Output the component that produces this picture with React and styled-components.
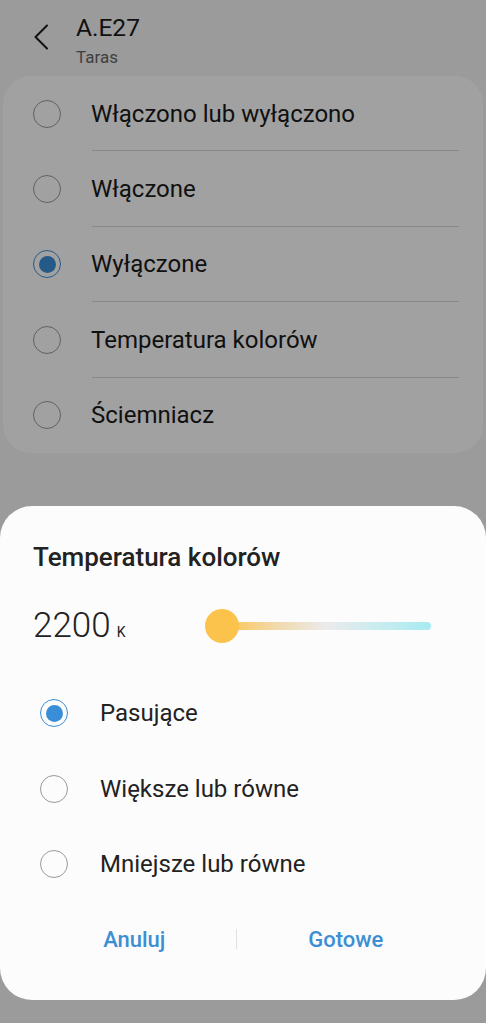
import React from 'react'
import styled, { createGlobalStyle } from 'styled-components'

const GlobalStyle = createGlobalStyle`
  html, body {
    margin: 0;
    padding: 0;
    background: #f5f5f5;
    font-family: Roboto, "Noto Sans", sans-serif;
    color: #1c1c1c;
  }
`

const Screen = styled.div`
  position: relative;
  width: 486px;
  height: 1023px;
  overflow: hidden;
  background: #f5f5f5;
`

const Header = styled.header`
  display: flex;
  align-items: flex-start;
  height: 76px;
  box-sizing: border-box;
  padding: 13px 0 0 33px;
  gap: 22px;
`

const BackButton = styled.div`
  width: 21px;
  display: flex;
  align-items: center;
  padding-top: 11px;
`

const TitleBlock = styled.div`
  display: flex;
  flex-direction: column;
`

const Title = styled.div`
  font-size: 24.5px;
  line-height: 29px;
  color: #1a1a1a;
`

const Subtitle = styled.div`
  font-size: 17px;
  line-height: 22px;
  color: #666;
  margin-top: 4px;
`

const Card = styled.div`
  margin: 0 3px;
  background: #fff;
  border-radius: 28px;
  display: flex;
  flex-direction: column;
`

const CardRow = styled.div`
  height: 75.4px;
  display: flex;
  align-items: center;
  padding-left: 30px;
  gap: 30px;
  position: relative;
  font-size: 24px;
  color: #1a1a1a;

  &:not(:last-child)::after {
    content: '';
    position: absolute;
    left: 89px;
    right: 24px;
    bottom: 0;
    height: 1px;
    background: #d8d8d8;
  }
`

const Radio = styled.span`
  flex: none;
  width: 28px;
  height: 28px;
  box-sizing: border-box;
  border-radius: 50%;
  border: 1.5px solid ${({ checked }) => (checked ? '#3a8ed8' : '#9a9a9a')};
  display: flex;
  align-items: center;
  justify-content: center;

  &::after {
    content: '';
    width: 17px;
    height: 17px;
    border-radius: 50%;
    background: #3a8ed8;
    display: ${({ checked }) => (checked ? 'block' : 'none')};
  }
`

const Dim = styled.div`
  position: absolute;
  inset: 0;
  background: rgba(0, 0, 0, 0.37);
  display: flex;
  flex-direction: column;
  justify-content: flex-end;
  padding-bottom: 23px;
`

const Sheet = styled.div`
  background: #fcfcfc;
  border-radius: 32px;
  padding: 35px 31px 36px 33px;
  display: flex;
  flex-direction: column;
`

const SheetTitle = styled.div`
  font-size: 26px;
  line-height: 32px;
  font-weight: 500;
  color: #222;
`

const ValueRow = styled.div`
  margin-top: 28px;
  height: 50px;
  display: flex;
  align-items: center;
`

const Value = styled.div`
  width: 172px;
  font-size: 35px;
  font-weight: 300;
  color: #222;
  display: flex;
  align-items: baseline;
  gap: 6px;

  small {
    font-size: 14px;
    font-weight: 400;
  }
`

const Slider = styled.div`
  position: relative;
  flex: none;
  width: 226px;
  height: 34px;
  display: flex;
  align-items: center;
`

const Track = styled.div`
  margin-left: 17px;
  flex: 1;
  height: 8px;
  border-radius: 4px;
  background: linear-gradient(90deg, #fbc24e 0%, #f2d9a8 25%, #ebebeb 50%, #c9ecef 75%, #a6ebf2 100%);
`

const Thumb = styled.div`
  position: absolute;
  left: 0;
  top: 0;
  width: 34px;
  height: 34px;
  border-radius: 50%;
  background: #fcc34c;
`

const Options = styled.div`
  margin-top: 25px;
  display: flex;
  flex-direction: column;
`

const Option = styled.div`
  height: 75.5px;
  display: flex;
  align-items: center;
  padding-left: 7px;
  gap: 32px;
  font-size: 24px;
  color: #222;
`

const Buttons = styled.div`
  margin: 12px 4px 0 -4px;
  height: 50px;
  display: flex;
  align-items: center;
`

const ActionButton = styled.div`
  flex: 1;
  text-align: center;
  font-size: 22px;
  font-weight: 500;
  color: #3d8fd3;
`

const Separator = styled.div`
  width: 1px;
  height: 20px;
  margin: 0 4px 0 -4px;
  background: #e0e0e0;
`

const modes = [
  'Włączono lub wyłączono',
  'Włączone',
  'Wyłączone',
  'Temperatura kolorów',
  'Ściemniacz'
]

const comparisons = ['Pasujące', 'Większe lub równe', 'Mniejsze lub równe']

const App = () => (
  <Screen>
    <GlobalStyle />
    <Header>
      <BackButton>
        <svg width="16" height="26" viewBox="0 0 16 26" fill="none">
          <path d="M14 1.5 L2.5 13 L14 24.5" stroke="#1a1a1a" strokeWidth="2" strokeLinecap="round" strokeLinejoin="round" />
        </svg>
      </BackButton>
      <TitleBlock>
        <Title>A.E27</Title>
        <Subtitle>Taras</Subtitle>
      </TitleBlock>
    </Header>
    <Card>
      {modes.map((label, i) => (
        <CardRow key={label}>
          <Radio checked={i === 2} />
          {label}
        </CardRow>
      ))}
    </Card>
    <Dim>
      <Sheet>
        <SheetTitle>Temperatura kolorów</SheetTitle>
        <ValueRow>
          <Value>
            2200<small>K</small>
          </Value>
          <Slider>
            <Track />
            <Thumb />
          </Slider>
        </ValueRow>
        <Options>
          {comparisons.map((label, i) => (
            <Option key={label}>
              <Radio checked={i === 0} />
              {label}
            </Option>
          ))}
        </Options>
        <Buttons>
          <ActionButton>Anuluj</ActionButton>
          <Separator />
          <ActionButton>Gotowe</ActionButton>
        </Buttons>
      </Sheet>
    </Dim>
  </Screen>
)

export default App
